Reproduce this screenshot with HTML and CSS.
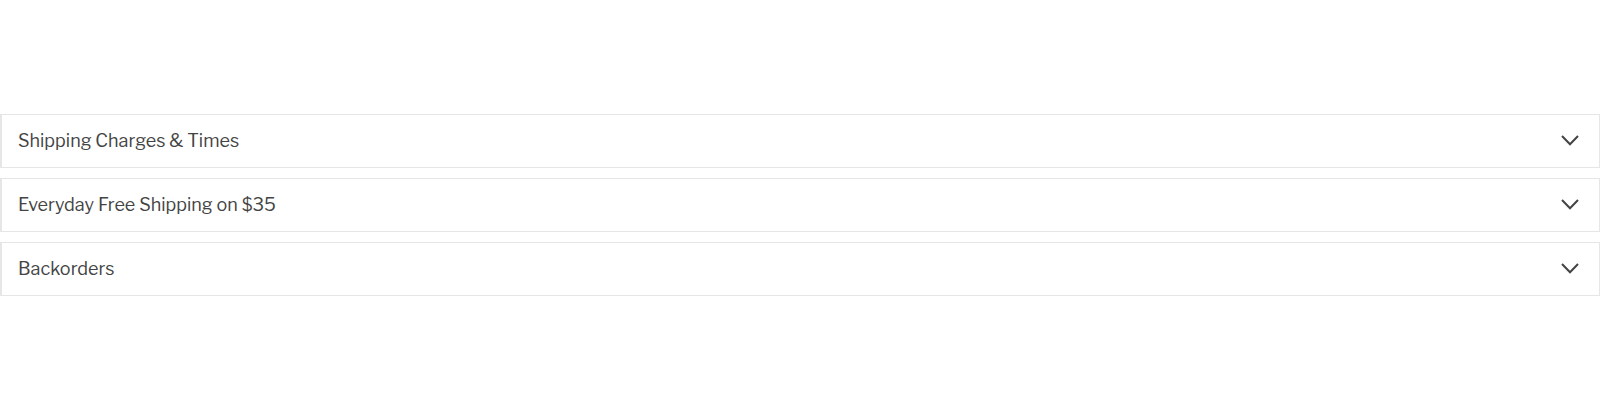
FILE: index.html
```html
<!DOCTYPE html>
<html>
<head>
<meta charset="utf-8">
<link rel="stylesheet" href="styles.css">
</head>
<body>
<div class="accordion">
  <div class="item">
    <span class="title">Shipping Charges &amp; Times</span>
    <svg class="chev" width="18" height="11" viewBox="0 0 18 11"><path d="M1 1 L9 9.2 L17 1" fill="none" stroke="#444" stroke-width="2"/></svg>
  </div>
  <div class="item">
    <span class="title">Everyday Free Shipping on $35</span>
    <svg class="chev" width="18" height="11" viewBox="0 0 18 11"><path d="M1 1 L9 9.2 L17 1" fill="none" stroke="#444" stroke-width="2"/></svg>
  </div>
  <div class="item">
    <span class="title">Backorders</span>
    <svg class="chev" width="18" height="11" viewBox="0 0 18 11"><path d="M1 1 L9 9.2 L17 1" fill="none" stroke="#444" stroke-width="2"/></svg>
  </div>
</div>
</body>
</html>
```
FILE: styles.css
```css
html, body {
  margin: 0;
  padding: 0;
  background: #fff;
}
body {
  font-family: "Libre Franklin", "Noto Sans", sans-serif;
  color: #444;
}
.accordion {
  padding-top: 114px;
  display: flex;
  flex-direction: column;
  gap: 10px;
}
.item {
  height: 52px;
  box-sizing: content-box;
  border: 1px solid #e6e6e6;
  border-left-width: 2px;
  display: flex;
  align-items: center;
  justify-content: space-between;
  padding: 0 20px 2px 16px;
  height: 50px;
}
.title {
  font-size: 18px;
  font-weight: 400;
}
.chev {
  display: block;
}
```
